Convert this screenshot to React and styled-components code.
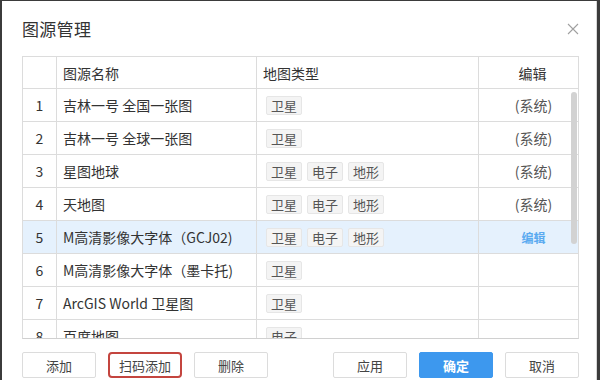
import React from "react";
import styled, { createGlobalStyle } from "styled-components";

const Global = createGlobalStyle`
  html, body { margin: 0; padding: 0; background: #3b3b3b; }
  body { width: 600px; height: 380px; overflow: hidden; }
  * { box-sizing: border-box; }
`;

const FONT = `"Microsoft YaHei", "Noto Sans CJK SC", "Noto Sans", sans-serif`;

const Dialog = styled.div`
  margin: 1px 3px 0 2px;
  height: 379px;
  background: #fff;
  font-family: ${FONT};
  color: #333;
  display: flex;
  flex-direction: column;
  padding: 0 0 0 20px;
  border-right: 1px solid #d8d8d8;
  overflow: hidden;
`;

const Header = styled.div`
  display: flex;
  align-items: center;
  justify-content: space-between;
  height: 55px;
  padding-right: 16px;
`;

const Title = styled.div`
  font-size: 17px;
  line-height: 24px;
  color: #333;
  letter-spacing: 0.3px;
  padding-top: 1px;
`;

const Close = styled.button`
  border: none;
  background: none;
  padding: 0;
  width: 14px;
  height: 14px;
  display: flex;
  align-items: center;
  justify-content: center;
  margin-top: 1px;
`;

const TableBox = styled.div`
  width: 557px;
  border: 1px solid #dcdcdc;
  border-bottom-color: #d0d0d0;
  font-size: 14px;
`;

const Row = styled.div`
  display: grid;
  grid-template-columns: 33px 200px 222px 1fr;
  height: ${(p) => (p.$head ? 32 : 33)}px;
  border-bottom: 1px solid #dcdcdc;
  background: ${(p) => (p.$active ? "#e5f1fd" : "#fff")};
`;

const Cell = styled.div`
  display: flex;
  align-items: center;
  justify-content: ${(p) => (p.$center ? "center" : "flex-start")};
  padding-left: ${(p) => p.$pl || 0}px;
  border-left: ${(p) => (p.$first ? "none" : "1px solid #dcdcdc")};
  color: #333;
  white-space: nowrap;
  gap: 5px;
`;

const Body = styled.div`
  position: relative;
  height: 249px;
  overflow: hidden;
`;

const Thumb = styled.div`
  position: absolute;
  right: 1px;
  top: 3px;
  width: 6px;
  height: 152px;
  border-radius: 3px;
  background: #d2d2d2;
`;

const Tag = styled.span`
  display: inline-flex;
  align-items: center;
  justify-content: center;
  height: 19px;
  padding: 0 4px;
  min-width: 36px;
  font-size: 13px;
  color: #555;
  background: #f4f4f4;
  border: 1px solid #e6e6e6;
  border-radius: 2px;
`;

const Sys = styled.span`
  color: #555;
  font-size: 14px;
  margin-left: 10px;
`;

const EditLink = styled.span`
  color: #5aaaf0;
  font-size: 12px;
  font-weight: bold;
  margin-left: 10px;
`;

const HeadText = styled.span`
  margin-left: ${(p) => p.$ml || 0}px;
  color: #333;
`;

const Footer = styled.div`
  display: flex;
  justify-content: space-between;
  padding-top: 13px;
  width: 557px;
`;

const Group = styled.div`
  display: flex;
  gap: 12px;
`;

const Btn = styled.button`
  width: 74px;
  height: 26px;
  font-family: ${FONT};
  font-size: 13px;
  color: ${(p) => (p.$primary ? "#fff" : "#444")};
  background: ${(p) => (p.$primary ? "#3d98ee" : "#fff")};
  border: ${(p) =>
    p.$primary ? "1px solid #3d98ee" : p.$marked ? "2px solid #c4453f" : "1px solid #dcdcdc"};
  border-radius: ${(p) => (p.$marked ? 4 : 2)}px;
  font-weight: ${(p) => (p.$primary ? "bold" : "normal")};
  padding: 0;
  display: flex;
  align-items: center;
  justify-content: center;
`;

const rows = [
  { n: 1, name: "吉林一号 全国一张图", tags: ["卫星"], edit: "sys" },
  { n: 2, name: "吉林一号 全球一张图", tags: ["卫星"], edit: "sys" },
  { n: 3, name: "星图地球", tags: ["卫星", "电子", "地形"], edit: "sys" },
  { n: 4, name: "天地图", tags: ["卫星", "电子", "地形"], edit: "sys" },
  { n: 5, name: "M高清影像大字体（GCJ02)", tags: ["卫星", "电子", "地形"], edit: "link", active: true },
  { n: 6, name: "M高清影像大字体（墨卡托)", tags: ["卫星"] },
  { n: 7, name: "ArcGIS World 卫星图", tags: ["卫星"] },
  { n: 8, name: "百度地图", tags: ["电子"] },
];

export default function App() {
  return (
    <>
      <Global />
      <Dialog>
        <Header>
          <Title>图源管理</Title>
          <Close aria-label="close">
            <svg width="12" height="12" viewBox="0 0 12 12">
              <path d="M1 1 L11 11 M11 1 L1 11" stroke="#a0a0a0" strokeWidth="1.1" />
            </svg>
          </Close>
        </Header>
        <TableBox>
          <Row $head>
            <Cell $first />
            <Cell $pl={6}>图源名称</Cell>
            <Cell $pl={6}>地图类型</Cell>
            <Cell $center>
              <HeadText $ml={8}>编辑</HeadText>
            </Cell>
          </Row>
          <Body>
            {rows.map((r) => (
              <Row key={r.n} $active={r.active}>
                <Cell $first $center>{r.n}</Cell>
                <Cell $pl={6}>{r.name}</Cell>
                <Cell $pl={9}>
                  {r.tags.map((t) => (
                    <Tag key={t}>{t}</Tag>
                  ))}
                </Cell>
                <Cell $center>
                  {r.edit === "sys" && <Sys>(系统)</Sys>}
                  {r.edit === "link" && <EditLink>编辑</EditLink>}
                </Cell>
              </Row>
            ))}
            <Thumb />
          </Body>
        </TableBox>
        <Footer>
          <Group>
            <Btn>添加</Btn>
            <Btn $marked>扫码添加</Btn>
            <Btn>删除</Btn>
          </Group>
          <Group>
            <Btn>应用</Btn>
            <Btn $primary>确定</Btn>
            <Btn>取消</Btn>
          </Group>
        </Footer>
      </Dialog>
    </>
  );
}
